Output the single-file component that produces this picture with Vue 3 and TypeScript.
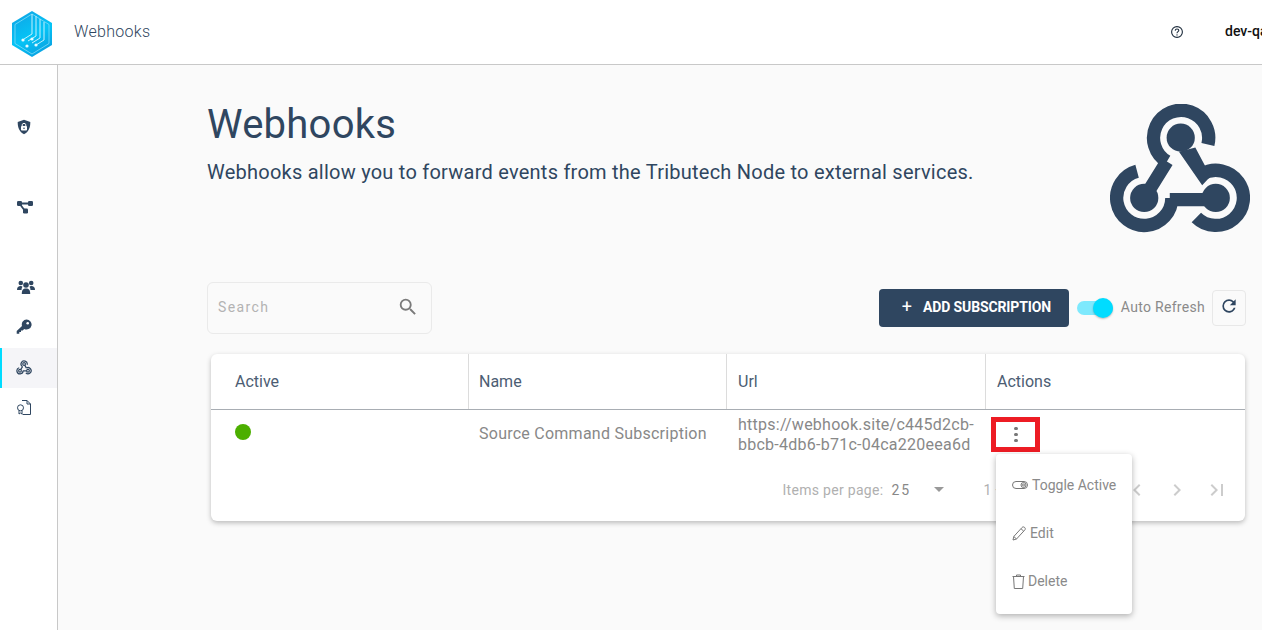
<script setup lang="ts">
// webhook mark: three rings with a stem each, plus the three hubs
const webhookStrokes = [
  'M57.2 57.7A27 27 0 1 1 97.3 41M57.2 57.7L35 93.3',
  'M91.5 69.9A27 27 0 1 1 86 112.4',
  'M62 93.3A27 27 0 1 1 28 67.2M60 95H105',
]
// the stem from the top hub widens as it runs into the right ring
const webhookWedge = 'M69 48L91.7 81 100 72 95 62.7 85 44Z'
const webhookHubs = [
  { x: 70.7, y: 34.3 },
  { x: 35, y: 93.3 },
  { x: 105, y: 93.3 },
]

const columns = ['Active', 'Name', 'Url', 'Actions']
</script>

<template>
  <div class="page">
    <header class="topbar">
      <svg class="logo" width="40" height="46" viewBox="0 0 40 46">
        <defs>
          <linearGradient id="hex" x1="0.2" y1="0" x2="0.7" y2="1">
            <stop offset="0" stop-color="#0fa6e6" />
            <stop offset="0.55" stop-color="#05c4f6" />
            <stop offset="1" stop-color="#0a9fe0" />
          </linearGradient>
        </defs>
        <polygon points="20,0 40,12 40,34 20,46 0,34 0,12" fill="url(#hex)" />
        <polygon points="20,3 37,13.5 37,32.5 20,43 3,32.5 3,13.5" fill="none" stroke="#7fdcf8" stroke-width="0.8" />
        <g fill="none" stroke="#c5f1fd" stroke-width="1">
          <path d="M20 3V23L12 28" />
          <path d="M24 5V25L16 30" />
          <path d="M28 8V27L20 32" />
          <path d="M32 11V29L24 34" />
        </g>
        <g fill="#e6fbff">
          <circle cx="11" cy="29" r="1.6" />
          <circle cx="15" cy="35" r="1.6" />
          <circle cx="20" cy="28" r="1.6" />
          <circle cx="24" cy="34" r="1.6" />
        </g>
      </svg>
      <span class="topbar-title">Webhooks</span>
      <div class="topbar-right">
        <svg class="help" width="14" height="14" viewBox="0 0 14 14">
          <circle cx="7" cy="7" r="5.4" fill="none" stroke="#1d2c3c" stroke-width="1.1" />
          <path d="M5.2 5.6C5.3 4.5 6 4 7 4S8.8 4.6 8.8 5.5C8.8 6.7 7 6.7 7 8.2" fill="none" stroke="#1d2c3c" stroke-width="1.1" />
          <circle cx="7" cy="9.9" r="0.7" fill="#1d2c3c" />
        </svg>
        <span class="tenant">dev-qa-tenant</span>
      </div>
    </header>

    <div class="body">
      <nav class="sidebar">
        <a class="nav-item">
          <svg width="16" height="16" viewBox="0 0 16 16">
            <path d="M8 .8L14.3 3C14.4 8.6 12.6 13 8 15.2 3.4 13 1.6 8.6 1.7 3Z" fill="#2f4660" />
            <rect x="5" y="7" width="6" height="4.6" rx="0.8" fill="#fff" />
            <path d="M6.2 7V5.8C6.2 3.9 9.8 3.9 9.8 5.8V7" fill="none" stroke="#fff" stroke-width="1" />
            <circle cx="8" cy="9.3" r="0.8" fill="#2f4660" />
          </svg>
        </a>
        <a class="nav-item group-start">
          <svg class="nudge-1" width="16" height="13" viewBox="0 0 16 13">
            <path d="M2.5 2.5H13.5M2.5 2.5L8 10" stroke="#2f4660" stroke-width="1.8" fill="none" />
            <rect x="0" y="0" width="5" height="5" rx="1.3" fill="#2f4660" />
            <rect x="11" y="0" width="5" height="5" rx="1.3" fill="#2f4660" />
            <rect x="6" y="7.5" width="5" height="5" rx="1.3" fill="#2f4660" />
          </svg>
        </a>
        <a class="nav-item group-start">
          <svg class="nudge-2" width="18" height="15" viewBox="0 0 18 15" fill="#2f4660">
            <circle cx="3.8" cy="3" r="2.3" />
            <circle cx="14.2" cy="3" r="2.3" />
            <circle cx="9" cy="5" r="2.8" />
            <path d="M0 10C0 7 1.5 6 3.5 6 4.5 6 5 6.3 5.5 6.8 4.8 7.6 4.5 8.7 4.5 10Z" />
            <path d="M18 10C18 7 16.5 6 14.5 6 13.5 6 13 6.3 12.5 6.8 13.2 7.6 13.5 8.7 13.5 10Z" />
            <path d="M4.8 14C4.8 10 6 8.5 9 8.5S13.2 10 13.2 14Z" />
          </svg>
        </a>
        <a class="nav-item">
          <svg width="16" height="16" viewBox="0 0 16 16" fill="#2f4660">
            <path d="M10.5 0.5A5 5 0 1 1 8.2 9.9L6.7 11.4H5V13.1H3.3V14.8H0.7V12L6 6.9A5 5 0 0 1 10.5 0.5Z" />
            <circle cx="11.7" cy="4.3" r="1.3" fill="#fff" />
          </svg>
        </a>
        <a class="nav-item active">
          <svg width="16" height="15" viewBox="0 0 140 130">
            <path v-for="d in webhookStrokes" :key="d" :d="d" fill="none" stroke="#2f4660" stroke-width="11" />
            <path d="M70.7 34.3L91.5 69.9" stroke="#2f4660" stroke-width="11" />
            <circle v-for="h in webhookHubs" :key="h.x" :cx="h.x" :cy="h.y" r="12" fill="#f5f5f8" stroke="#2f4660" stroke-width="10" />
          </svg>
        </a>
        <a class="nav-item">
          <svg width="16" height="17" viewBox="0 0 16 17" fill="none" stroke="#2f4660" stroke-width="1">
            <path d="M6 1.5H11L14.5 5V15.5H6.5" />
            <path d="M11 1.5V5H14.5" />
            <circle cx="4.5" cy="8.8" r="3" />
            <path d="M3 11.5V15L4.5 14 6 15V11.5" />
          </svg>
        </a>
      </nav>

      <main class="content">
        <section class="hero">
          <div>
            <h1>Webhooks</h1>
            <p>Webhooks allow you to forward events from the Tributech Node to external services.</p>
          </div>
          <svg class="hero-icon" width="140" height="130" viewBox="1.5 1.5 137 127">
            <path v-for="d in webhookStrokes" :key="d" :d="d" fill="none" stroke="#2f4660" stroke-width="13" />
            <path :d="webhookWedge" fill="#2f4660" />
            <circle v-for="h in webhookHubs" :key="h.x" :cx="h.x" :cy="h.y" r="13.8" fill="#2f4660" />
          </svg>
        </section>

        <div class="toolbar">
          <label class="search">
            <span>Search</span>
            <svg width="22" height="22" viewBox="0 0 24 24">
              <path d="M9.5,3A6.5,6.5 0 0,1 16,9.5C16,11.11 15.41,12.59 14.44,13.73L14.71,14H15.5L20.5,19L19,20.5L14,15.5V14.71L13.73,14.44C12.59,15.41 11.11,16 9.5,16A6.5,6.5 0 0,1 3,9.5A6.5,6.5 0 0,1 9.5,3M9.5,5C7,5 5,7 5,9.5C5,12 7,14 9.5,14C12,14 14,12 14,9.5C14,7 12,5 9.5,5Z" fill="#7a7a7a" />
            </svg>
          </label>
          <button class="add-btn"><span class="plus">+</span>ADD SUBSCRIPTION</button>
          <span class="toggle"><span class="thumb"></span></span>
          <span class="toggle-label">Auto Refresh</span>
          <button class="refresh">
            <svg width="20" height="20" viewBox="0 0 24 24">
              <path d="M17.65,6.35C16.2,4.9 14.21,4 12,4A8,8 0 0,0 4,12A8,8 0 0,0 12,20C15.73,20 18.84,17.45 19.73,14H17.65C16.83,16.33 14.61,18 12,18A6,6 0 0,1 6,12A6,6 0 0,1 12,6C13.66,6 15.14,6.69 16.22,7.78L13,11H20V4L17.65,6.35Z" fill="#2f4660" />
            </svg>
          </button>
        </div>

        <div class="card">
          <div class="head-row">
            <div v-for="c in columns" :key="c" class="head-cell">{{ c }}</div>
          </div>
          <div class="data-row">
            <div class="cell-active"><span class="dot"></span></div>
            <div class="cell">Source Command Subscription</div>
            <div class="cell url">https://webhook.site/c445d2cb-bbcb-4db6-b71c-04ca220eea6d</div>
            <div class="cell-actions">
              <button class="kebab"><i></i><i></i><i></i></button>
              <div class="menu">
                <div class="menu-item">
                  <svg width="16" height="12" viewBox="0 0 16 12" fill="none" stroke="#777" stroke-width="1">
                    <rect x="0.5" y="2.5" width="15" height="7" rx="3.5" />
                    <circle cx="11.5" cy="6" r="2.5" />
                    <circle cx="11.5" cy="6" r="1" />
                  </svg>
                  <span class="l4">Toggle Active</span>
                </div>
                <div class="menu-item">
                  <svg width="14" height="15" viewBox="0 0 14 15" fill="none" stroke="#777" stroke-width="1">
                    <path d="M1 14L1.8 10.5 10 1.5C10.8 0.7 11.8 0.7 12.7 1.5 13.5 2.3 13.5 3.3 12.7 4.1L4.5 13Z" />
                    <path d="M9 2.7L11.7 5.2M1.8 10.5L4.5 13" />
                  </svg>
                  <span class="l4">Edit</span>
                </div>
                <div class="menu-item">
                  <svg width="13" height="15" viewBox="0 0 13 15" fill="none" stroke="#777" stroke-width="1">
                    <path d="M0.5 2.5H12.5M4.5 2.5V1H8.5V2.5" />
                    <path d="M1.5 2.5L2.3 14.5H10.7L11.5 2.5" />
                  </svg>
                  <span class="l3">Delete</span>
                </div>
              </div>
            </div>
          </div>
          <div class="pager">
            <span class="pager-label">Items per page:</span>
            <span class="pager-select">25</span>
            <span class="caret"></span>
            <span class="pager-range">1 – 1 of 1</span>
            <button class="page-btn"><svg width="24" height="24" viewBox="0 0 24 24"><path d="M18.41 16.59L13.82 12l4.59-4.59L17 6l-6 6 6 6zM6 6h2v12H6z" /></svg></button>
            <button class="page-btn"><svg width="24" height="24" viewBox="0 0 24 24"><path d="M15.41 7.41L14 6l-6 6 6 6 1.41-1.41L10.83 12z" /></svg></button>
            <button class="page-btn"><svg width="24" height="24" viewBox="0 0 24 24"><path d="M10 6L8.59 7.41 13.17 12l-4.58 4.59L10 18l6-6z" /></svg></button>
            <button class="page-btn"><svg width="24" height="24" viewBox="0 0 24 24"><path d="M5.59 7.41L10.18 12l-4.59 4.59L7 18l6-6-6-6zM16 6h2v12h-2z" /></svg></button>
          </div>
        </div>
      </main>
    </div>
  </div>
</template>

<style scoped>
.page {
  width: 1262px;
  height: 630px;
  overflow: hidden;
  font-family: Roboto, 'Liberation Sans', sans-serif;
  background: #fafafa;
  display: flex;
  flex-direction: column;
}

.topbar {
  height: 64px;
  flex-shrink: 0;
  display: flex;
  align-items: center;
  background: #fff;
  border-bottom: 1px solid #c8c8c8;
  box-sizing: content-box;
}

.logo {
  margin-left: 12px;
  margin-top: 4px;
}

.topbar-title {
  margin-left: 22px;
  margin-bottom: 2px;
  font-size: 16px;
  font-weight: 300;
  letter-spacing: 0.3px;
  color: #2f4660;
}

.topbar-right {
  margin-left: auto;
  width: 92px;
  display: flex;
  align-items: center;
  overflow: hidden;
  white-space: nowrap;
}

.help {
  flex-shrink: 0;
}

.tenant {
  margin-left: 41px;
  margin-bottom: 2px;
  font-size: 14px;
  font-weight: 500;
  color: #111;
}

.body {
  flex: 1;
  display: flex;
  min-height: 0;
}

.sidebar {
  width: 57px;
  flex-shrink: 0;
  padding-top: 42px;
  background: #fff;
  border-right: 1px solid #c8c8c8;
}

.nav-item {
  height: 40px;
  display: flex;
  align-items: center;
  justify-content: center;
  padding-right: 9px;
  box-sizing: border-box;
}

.nav-item.group-start {
  margin-top: 40px;
}

.nav-item.active {
  margin-top: 1px;
  margin-bottom: -1px;
  padding-bottom: 2px;
  background: #f5f5f8;
  border-left: 2px solid #00dcff;
  padding-right: 11px;
}

.nudge-1 {
  margin-left: 2px;
}

.nudge-2 {
  margin-left: 4px;
}

.content {
  flex: 1;
  min-width: 0;
  padding: 0 16px 0 149px;
}

.hero {
  display: flex;
  justify-content: space-between;
  height: 217px;
}

.hero h1 {
  margin: 34px 0 0;
  font-size: 40px;
  line-height: 52px;
  font-weight: 400;
  letter-spacing: 0.25px;
  color: #2f4660;
}

.hero p {
  margin: 6px 0 0;
  font-size: 20px;
  line-height: 30px;
  letter-spacing: 0.24px;
  color: #2f4660;
}

.hero-icon {
  margin-top: 39px;
  margin-right: -4px;
  flex-shrink: 0;
}

.toolbar {
  display: flex;
  align-items: center;
  height: 52px;
}

.search {
  width: 225px;
  height: 52px;
  box-sizing: border-box;
  border: 1px solid #eaeaea;
  border-radius: 6px;
  display: flex;
  align-items: center;
  justify-content: space-between;
  padding: 0 12px 2px 10px;
  margin-right: auto;
  font-size: 14px;
  letter-spacing: 1.4px;
  color: #b3b3b3;
}

.add-btn {
  width: 190px;
  height: 38px;
  border: 0;
  border-radius: 4px;
  background: #2f4660;
  color: #fff;
  font-family: inherit;
  font-size: 14px;
  font-weight: 700;
  letter-spacing: -0.12px;
  display: flex;
  align-items: center;
  padding: 0 0 2px 23px;
}

.plus {
  font-size: 18px;
  font-weight: 400;
  margin-right: 11px;
  line-height: 1;
}

.toggle {
  position: relative;
  width: 36px;
  height: 14px;
  margin-left: 8px;
  border-radius: 7px;
  background: #7ee9fd;
}

.thumb {
  position: absolute;
  right: 0;
  top: -3px;
  width: 20px;
  height: 20px;
  border-radius: 50%;
  background: #00dcff;
  box-shadow: 0 1px 2px rgba(0, 0, 0, 0.25);
}

.toggle-label {
  margin-left: 8px;
  margin-bottom: 2px;
  font-size: 14px;
  letter-spacing: 0.3px;
  color: #8a8a8a;
}

.refresh {
  width: 34px;
  height: 36px;
  margin-left: 7px;
  padding: 0 0 4px;
  display: flex;
  align-items: center;
  justify-content: center;
  border: 1px solid #e8e8e8;
  border-radius: 4px;
  background: #fafafa;
}

.card {
  margin: 20px 1px 0 4px;
  height: 167px;
  background: #fff;
  border-radius: 6px;
  box-shadow: 0 2px 5px rgba(0, 0, 0, 0.25);
}

.head-row,
.data-row {
  display: grid;
  grid-template-columns: 258px 258px 259px 259px;
}

.head-row {
  height: 56px;
  border-bottom: 1px solid #a8adb3;
  box-sizing: border-box;
}

.head-cell {
  display: flex;
  align-items: center;
  padding-left: 11px;
  font-size: 16px;
  color: #4c5d73;
  border-right: 1px solid #dcdcdc;
}

.head-cell:first-child {
  padding-left: 24px;
}

.head-cell:nth-child(2) {
  padding-left: 10px;
}

.head-cell:last-child {
  border-right: 0;
}

.data-row {
  height: 48px;
}

.cell-active {
  padding: 14px 0 0 24px;
}

.dot {
  display: block;
  width: 16px;
  height: 16px;
  border-radius: 50%;
  background: #4caf00;
}

.cell {
  padding: 14px 10px 0 10px;
  font-size: 16px;
  line-height: 20px;
  letter-spacing: 0.25px;
  color: #888;
}

.cell.url {
  padding-top: 5px;
  padding-left: 11px;
  padding-right: 8px;
}

.cell-actions {
  position: relative;
  padding: 7px 0 0 5px;
}

.kebab {
  width: 49px;
  height: 35px;
  padding: 0 0 0 1px;
  border: 5px solid #ed1c24;
  background: #fff;
  display: flex;
  flex-direction: column;
  align-items: center;
  justify-content: center;
  gap: 2.5px;
}

.kebab i {
  width: 3.5px;
  height: 3.5px;
  border-radius: 50%;
  background: #777;
}

.menu {
  position: absolute;
  left: 10px;
  top: 44px;
  width: 136px;
  height: 160px;
  padding: 8px 0;
  box-sizing: border-box;
  background: #fff;
  border-radius: 4px;
  box-shadow: 0 2px 6px rgba(0, 0, 0, 0.3);
  z-index: 2;
}

.menu-item {
  height: 48px;
  box-sizing: border-box;
  padding: 0 0 2px 16px;
  display: flex;
  align-items: center;
  font-size: 14px;
  color: #8a8a8a;
}

.l4 {
  margin-left: 4px;
}

.l3 {
  margin-left: 3px;
}

.pager {
  height: 63px;
  display: flex;
  align-items: center;
  justify-content: flex-end;
  padding-right: 8px;
  font-size: 14px;
  color: #b0b0b0;
}

.pager-label {
  letter-spacing: 0.3px;
}

.pager-select {
  margin-left: 8px;
  width: 43px;
  font-size: 14px;
  letter-spacing: 2px;
  color: #888;
}

.caret {
  width: 0;
  height: 0;
  margin-right: 15px;
  border-left: 5px solid transparent;
  border-right: 5px solid transparent;
  border-top: 5px solid #999;
}

.pager-range {
  margin: 0 34px 0 24px;
  white-space: nowrap;
}

.page-btn {
  width: 40px;
  height: 40px;
  padding: 0;
  border: 0;
  background: none;
  display: flex;
  align-items: center;
  justify-content: center;
  fill: #ccc;
}
</style>

<style>
html,
body {
  margin: 0;
  overflow: hidden;
}
</style>
